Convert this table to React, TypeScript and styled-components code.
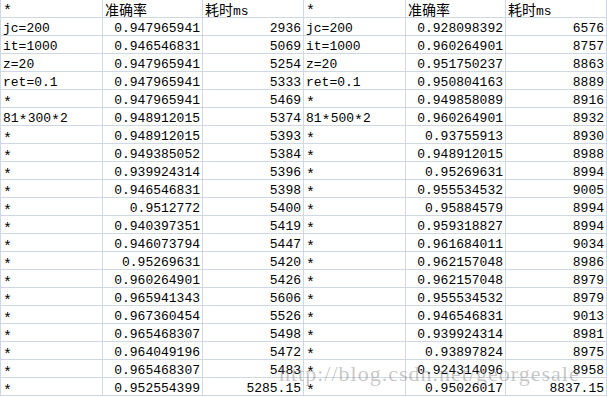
import React from "react";
import styled, { createGlobalStyle } from "styled-components";

const Global = createGlobalStyle`
  html, body { margin: 0; padding: 0; background: #ffffff; }
  body { font-family: "Liberation Mono", monospace; }
`;

const Sheet = styled.div`
  position: relative;
  width: 607px;
  height: 397px;
  overflow: hidden;
  background: #ffffff;
`;

const Grid = styled.div`
  display: grid;
  grid-template-columns: 102px 100px 101px 102px 100px 101px;
  grid-auto-rows: 18px;
  border-left: 1px solid #d0d7e5;
  width: 606px;
`;

const Cell = styled.div<{ $align: "left" | "right" }>`
  box-sizing: border-box;
  height: 18px;
  border-right: 1px solid #d0d7e5;
  border-bottom: 1px solid #d0d7e5;
  padding: 4px 2px 0 ${(p) => (p.$align === "left" ? "2px" : "0")};
  text-align: ${(p) => p.$align};
  font-family: "Liberation Mono", "Noto Sans CJK SC", monospace;
  font-size: 13px;
  line-height: 13px;
  color: #000000;
  white-space: nowrap;
`;

const HeaderCell = styled(Cell)`
  padding-top: 1px;
  line-height: 16px;
`;

const Han = styled.span`
  font-family: "Noto Sans CJK SC", sans-serif;
  font-size: 14px;
  line-height: 16px;
`;

const Star = styled.span`
  font-size: 15px;
  line-height: 13px;
  vertical-align: -3px;
`;

const Watermark = styled.div`
  position: absolute;
  left: 279px;
  top: 363px;
  font-family: "Liberation Serif", serif;
  font-size: 22px;
  line-height: 22px;
  letter-spacing: 1px;
  color: rgba(120, 120, 120, 0.42);
  white-space: nowrap;
  pointer-events: none;
`;

type Row = [string, string, string];

const left: Row[] = [
  ["jc=200", "0.947965941", "2936"],
  ["it=1000", "0.946546831", "5069"],
  ["z=20", "0.947965941", "5254"],
  ["ret=0.1", "0.947965941", "5333"],
  ["*", "0.947965941", "5469"],
  ["81*300*2", "0.948912015", "5374"],
  ["*", "0.948912015", "5393"],
  ["*", "0.949385052", "5384"],
  ["*", "0.939924314", "5396"],
  ["*", "0.946546831", "5398"],
  ["*", "0.9512772", "5400"],
  ["*", "0.940397351", "5419"],
  ["*", "0.946073794", "5447"],
  ["*", "0.95269631", "5420"],
  ["*", "0.960264901", "5426"],
  ["*", "0.965941343", "5606"],
  ["*", "0.967360454", "5526"],
  ["*", "0.965468307", "5498"],
  ["*", "0.964049196", "5472"],
  ["*", "0.965468307", "5483"],
  ["*", "0.952554399", "5285.15"],
];

const right: Row[] = [
  ["jc=200", "0.928098392", "6576"],
  ["it=1000", "0.960264901", "8757"],
  ["z=20", "0.951750237", "8863"],
  ["ret=0.1", "0.950804163", "8889"],
  ["*", "0.949858089", "8916"],
  ["81*500*2", "0.960264901", "8932"],
  ["*", "0.93755913", "8930"],
  ["*", "0.948912015", "8988"],
  ["*", "0.95269631", "8994"],
  ["*", "0.955534532", "9005"],
  ["*", "0.95884579", "8994"],
  ["*", "0.959318827", "8994"],
  ["*", "0.961684011", "9034"],
  ["*", "0.962157048", "8986"],
  ["*", "0.962157048", "8979"],
  ["*", "0.955534532", "8979"],
  ["*", "0.946546831", "9013"],
  ["*", "0.939924314", "8981"],
  ["*", "0.93897824", "8975"],
  ["*", "0.924314096", "8958"],
  ["*", "0.95026017", "8837.15"],
];

const Label: React.FC<{ text: string }> = ({ text }) => {
  const parts = text.split("*");
  return (
    <>
      {parts.map((p, i) => (
        <React.Fragment key={i}>
          {i > 0 && <Star>*</Star>}
          {p}
        </React.Fragment>
      ))}
    </>
  );
};

const HeaderGroup: React.FC = () => (
  <>
    <HeaderCell $align="left">
      <Star>*</Star>
    </HeaderCell>
    <HeaderCell $align="left">
      <Han>准确率</Han>
    </HeaderCell>
    <HeaderCell $align="left">
      <Han>耗时</Han>ms
    </HeaderCell>
  </>
);

export default function App() {
  return (
    <>
      <Global />
      <Sheet>
        <Grid>
          <HeaderGroup />
          <HeaderGroup />
          {left.map((l, i) => {
            const r = right[i];
            return (
              <React.Fragment key={i}>
                <Cell $align="left">
                  <Label text={l[0]} />
                </Cell>
                <Cell $align="right">{l[1]}</Cell>
                <Cell $align="right">{l[2]}</Cell>
                <Cell $align="left">
                  <Label text={r[0]} />
                </Cell>
                <Cell $align="right">{r[1]}</Cell>
                <Cell $align="right">{r[2]}</Cell>
              </React.Fragment>
            );
          })}
        </Grid>
        <Watermark>http://blog.csdn.net/georgesale</Watermark>
      </Sheet>
    </>
  );
}
